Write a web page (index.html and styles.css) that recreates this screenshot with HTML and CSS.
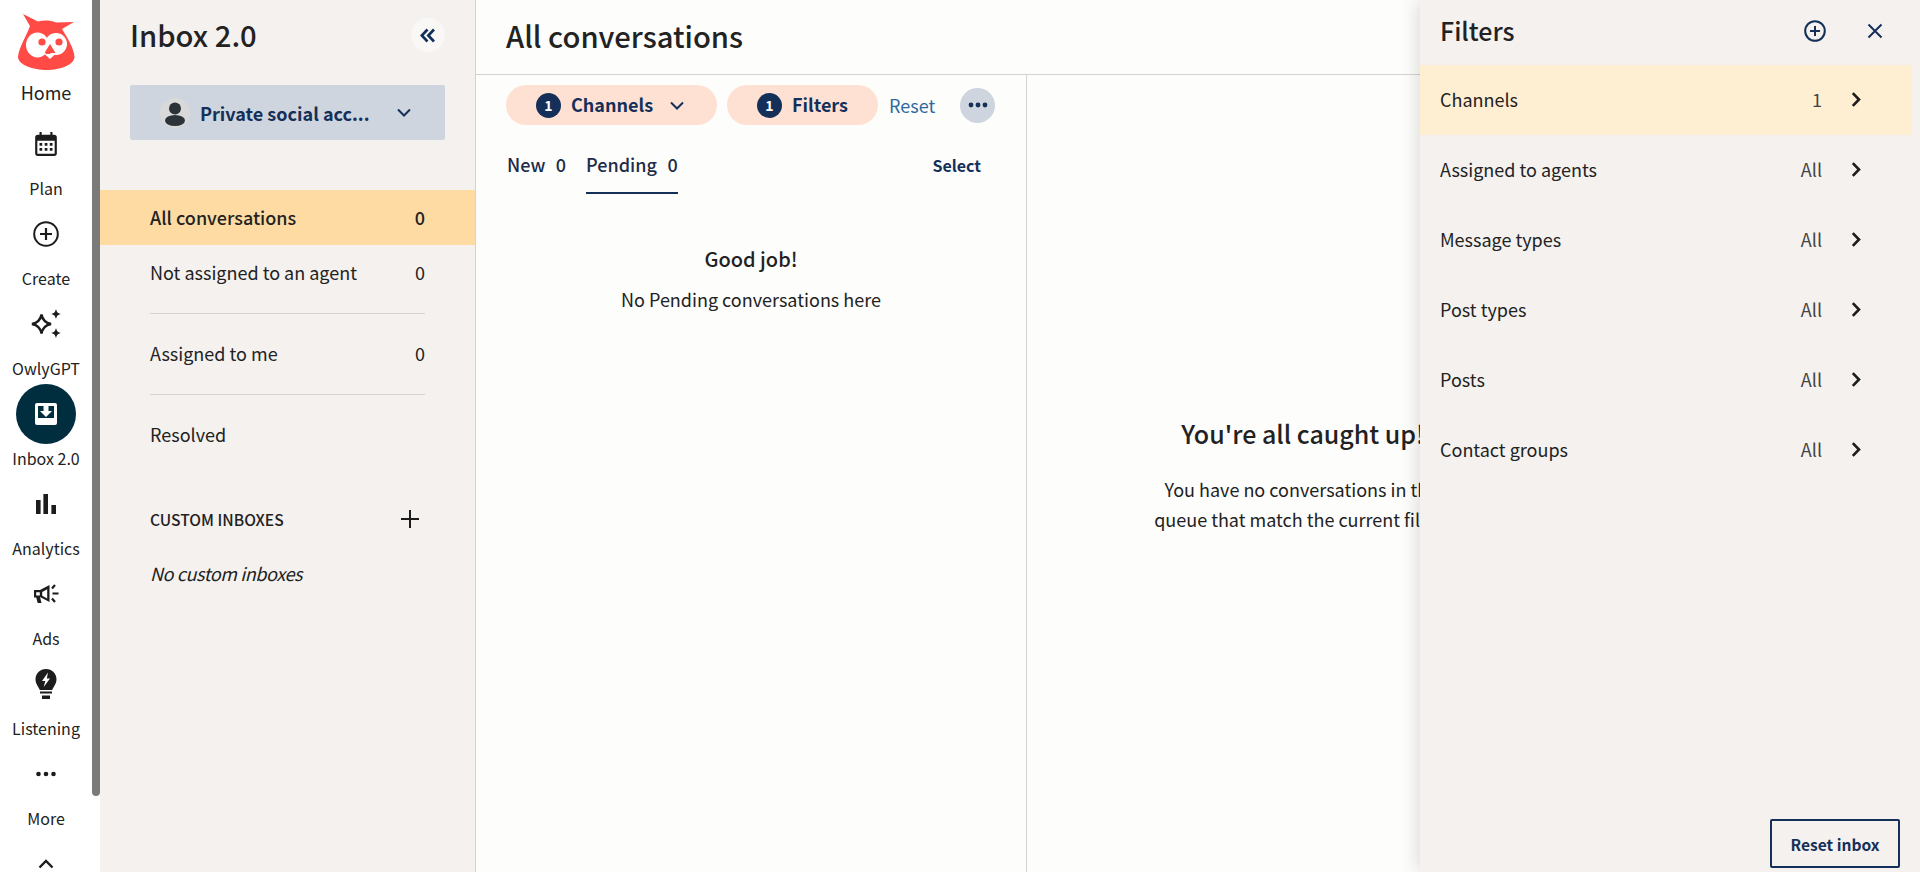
FILE: index.html
```html
<!DOCTYPE html>
<html lang="en">
<head>
    <meta charset="UTF-8">
    <meta name="viewport" content="width=device-width, initial-scale=1.0">
    <title>Inbox 2.0</title>
    <link rel="stylesheet" href="styles.css">
</head>
<body>

<div class="app">

    <!-- Main navigation -->
    <nav class="rail">
        <div class="rail-home">
            <svg class="owl" viewBox="10 8 72 68" width="72" height="68">
                <path fill="#ff4a45" d="M23 14 L38 21.500 C43 20 50 20 56 22.500 L74 22 L62 29 C67 37 74 48 74.500 57 C74 65 60 70 47 70 C33 70 18.500 65 18 57 C19 47 26 37 30 26 Z"/>
                <ellipse fill="#fff" cx="37.500" cy="45" rx="11.500" ry="12.500"/>
                <ellipse fill="#fff" cx="56" cy="44" rx="11" ry="11"/>
                <circle fill="#ff4a45" cx="42" cy="42" r="3.600"/>
                <circle fill="#ff4a45" cx="59" cy="42" r="3.600"/>
                <path fill="#ff4a45" d="M50 44 L55.500 53 H44.500 Z"/>
                <path fill="#fff" d="M44.500 54 H55.500 L50 59 Z"/>
            </svg>
            <span class="rail-label">Home</span>
        </div>
        <div class="rail-item">
            <div class="rail-icon">
                <svg viewBox="0 0 24 24" width="26" height="26"><path fill="#1c1c1c" d="M6 1h2v2.500h8V1h2v2.500h1.500A2.500 2.500 0 0 1 22 6v14.500a2.500 2.500 0 0 1-2.500 2.500h-15A2.500 2.500 0 0 1 2 20.500V6a2.500 2.500 0 0 1 2.500-2.500H6zM4 9v11.500a.5.5 0 0 0 .5.5h15a.5.5 0 0 0 .5-.5V9z"/><path fill="#1c1c1c" d="M6 11h2.500v2.500H6zM10.800 11h2.500v2.500h-2.500zM15.500 11H18v2.500h-2.500zM6 15.800h2.500v2.500H6zM10.800 15.800h2.500v2.500h-2.500zM15.500 15.800H18v2.500h-2.500z"/></svg>
            </div>
            <span class="rail-label">Plan</span>
        </div>
        <div class="rail-item">
            <div class="rail-icon">
                <svg viewBox="0 0 26 26" width="26" height="26"><circle cx="13" cy="13" r="11.800" fill="none" stroke="#1c1c1c" stroke-width="2"/><path d="M13 7v12M7 13h12" stroke="#1c1c1c" stroke-width="2.200"/></svg>
            </div>
            <span class="rail-label">Create</span>
        </div>
        <div class="rail-item">
            <div class="rail-icon">
                <svg viewBox="0 0 32 32" width="32" height="32"><path fill="none" stroke="#1c1c1c" stroke-width="2.400" stroke-linejoin="miter" d="M11.500 6.500 C12.500 12 15 14.800 21 16 C15 17.200 12.500 20 11.500 25.500 C10.500 20 8 17.200 2 16 C8 14.800 10.500 12 11.500 6.500 Z"/><path fill="#1c1c1c" d="M26 1 C26.800 4.200 27.800 5.200 31 6 C27.800 6.800 26.800 7.800 26 11 C25.200 7.800 24.200 6.800 21 6 C24.200 5.200 25.200 4.200 26 1 Z"/><path fill="#1c1c1c" d="M26 20 C26.800 23.200 27.800 24.200 31 25 C27.800 25.800 26.800 26.800 26 30 C25.200 26.800 24.200 25.800 21 25 C24.200 24.200 25.200 23.200 26 20 Z"/></svg>
            </div>
            <span class="rail-label">OwlyGPT</span>
        </div>
        <div class="rail-item is-active">
            <div class="rail-icon">
                <svg viewBox="0 0 22 22" width="22" height="22"><rect width="22" height="22" rx="2" fill="#fff"/><rect x="3" y="3" width="16" height="12" fill="#002e3f"/><path fill="#fff" d="M8.500 3h5v5h3.500L11 14 5 8h3.500z"/></svg>
            </div>
            <span class="rail-label">Inbox 2.0</span>
        </div>
        <div class="rail-item">
            <div class="rail-icon">
                <svg viewBox="0 0 20 20" width="20" height="20"><path fill="#1c1c1c" d="M0 6h4.600v14H0zM7.400 0H12v20H7.400zM15.400 11H20v9h-4.600z"/></svg>
            </div>
            <span class="rail-label">Analytics</span>
        </div>
        <div class="rail-item">
            <div class="rail-icon">
                <svg viewBox="0 0 26 26" width="26" height="26"><path fill="#1c1c1c" fill-rule="evenodd" d="M1 9h6L16.500 4v17L7 16l1.500 6H4.700L3.200 16.500H1zM3.200 11.200v3.200h3.600v-3.200zM9.200 11v3.700l5 2.700V8.300z"/><path stroke="#1c1c1c" stroke-width="2.200" d="M19.500 12.500h6M19 7.500l3-3.500M19 17.500l3 3.500"/></svg>
            </div>
            <span class="rail-label">Ads</span>
        </div>
        <div class="rail-item">
            <div class="rail-icon">
                <svg viewBox="0 0 22 30" width="22" height="30"><path fill="#1c1c1c" d="M11 0C5 0 .5 4.500.5 10.300c0 4.200 2.500 6.700 4.300 10.700h12.400c1.800-4 4.300-6.500 4.300-10.700C21.500 4.500 17 0 11 0zM5 22.500h12V24.500H5zM7 26.500h8v3.500H7z"/><path fill="#fff" d="M13 3.500 L7 12 H10.300 L8.700 18 L15 9.500 H11.800 Z"/></svg>
            </div>
            <span class="rail-label">Listening</span>
        </div>
        <div class="rail-item">
            <div class="rail-icon">
                <svg viewBox="0 0 20 6" width="20" height="6"><circle cx="2.500" cy="3" r="2.300" fill="#1c1c1c"/><circle cx="10" cy="3" r="2.300" fill="#1c1c1c"/><circle cx="17.500" cy="3" r="2.300" fill="#1c1c1c"/></svg>
            </div>
            <span class="rail-label">More</span>
        </div>
        <div class="rail-item">
            <div class="rail-icon">
                <svg viewBox="0 0 16 10" width="16" height="10"><path d="M1.500 8.500 8 2l6.500 6.500" fill="none" stroke="#1c1c1c" stroke-width="2.400"/></svg>
            </div>
        </div>
        <div class="rail-thumb"></div>
    </nav>

    <!-- Inbox sidebar -->
    <aside class="sidebar">
        <div class="sidebar-head">
            <h1>Inbox 2.0</h1>
            <button class="collapse-btn">
                <svg viewBox="0 0 16 14" width="16" height="15"><path d="M7.500 1 1.800 7l5.700 6M14 1 8.300 7l5.700 6" fill="none" stroke="#143059" stroke-width="2.700"/></svg>
            </button>
        </div>
        <button class="account-btn">
            <span class="avatar">
                <svg viewBox="0 0 30 30" width="30" height="30"><circle cx="15" cy="10.500" r="6" fill="#2b3338"/><ellipse cx="15" cy="22.500" rx="10" ry="5.500" fill="#2b3338"/></svg>
            </span>
            <span class="account-name">Private social acc...</span>
            <svg class="account-caret" viewBox="0 0 14 9" width="14" height="9"><path d="M1 1.500 7 7.500l6-6" fill="none" stroke="#143059" stroke-width="2"/></svg>
        </button>

        <ul class="menu">
            <li class="menu-row is-current"><span>All conversations</span><span>0</span></li>
            <li class="menu-row"><span>Not assigned to an agent</span><span>0</span></li>
            <li class="menu-line"></li>
            <li class="menu-row"><span>Assigned to me</span><span>0</span></li>
            <li class="menu-line"></li>
            <li class="menu-row"><span>Resolved</span></li>
        </ul>

        <div class="custom-head">
            <span>CUSTOM INBOXES</span>
            <svg viewBox="0 0 20 20" width="20" height="20"><path d="M10 1v18M1 10h18" stroke="#1c1c1c" stroke-width="2"/></svg>
        </div>
        <p class="custom-empty">No custom inboxes</p>
    </aside>

    <!-- Conversations -->
    <main class="main">
        <header class="main-head">
            <h2>All conversations</h2>
        </header>
        <div class="main-body">
            <section class="list-col">
                <div class="toolbar">
                    <button class="pill pill-channels">
                        <span class="pill-num">1</span>
                        <span class="pill-text">Channels</span>
                        <svg viewBox="0 0 14 9" width="14" height="9"><path d="M1 1.500 7 7.500l6-6" fill="none" stroke="#143059" stroke-width="2"/></svg>
                    </button>
                    <button class="pill pill-filters">
                        <span class="pill-num">1</span>
                        <span class="pill-text">Filters</span>
                    </button>
                    <a class="reset-link">Reset</a>
                    <button class="dots-btn">
                        <svg viewBox="0 0 20 6" width="20" height="6"><circle cx="3" cy="3" r="2.400" fill="#143059"/><circle cx="10" cy="3" r="2.400" fill="#143059"/><circle cx="17" cy="3" r="2.400" fill="#143059"/></svg>
                    </button>
                </div>
                <div class="tabs">
                    <span class="tab"><span>New</span><span>0</span></span>
                    <span class="tab is-open"><span>Pending</span><span>0</span></span>
                    <a class="select-link">Select</a>
                </div>
                <div class="list-empty">
                    <h3>Good job!</h3>
                    <p>No Pending conversations here</p>
                </div>
            </section>
            <section class="detail-col">
                <h3>You're all caught up!</h3>
                <p>You have no conversations in this<br>queue that match the current filters</p>
            </section>
        </div>
    </main>

    <!-- Filter drawer, sits over the main area -->
    <aside class="drawer">
        <div class="drawer-head">
            <h2>Filters</h2>
            <svg class="drawer-add" viewBox="0 0 22 22" width="22" height="22"><circle cx="11" cy="11" r="9.800" fill="none" stroke="#143059" stroke-width="2"/><path d="M11 6v10M6 11h10" stroke="#143059" stroke-width="2"/></svg>
            <svg class="drawer-close" viewBox="0 0 16 16" width="16" height="16"><path d="M1.500 1.500l13 13M14.500 1.500l-13 13" stroke="#143059" stroke-width="2"/></svg>
        </div>
        <ul class="filter-list">
            <li class="filter-row is-on"><span class="filter-name">Channels</span><span class="filter-val">1</span><svg viewBox="0 0 10 15" width="10" height="15"><path d="M1.800 1.200 8 7.500l-6.200 6.300" fill="none" stroke="#1c1c1c" stroke-width="2.600"/></svg></li>
            <li class="filter-row"><span class="filter-name">Assigned to agents</span><span class="filter-val">All</span><svg viewBox="0 0 10 15" width="10" height="15"><path d="M1.800 1.200 8 7.500l-6.200 6.300" fill="none" stroke="#1c1c1c" stroke-width="2.600"/></svg></li>
            <li class="filter-row"><span class="filter-name">Message types</span><span class="filter-val">All</span><svg viewBox="0 0 10 15" width="10" height="15"><path d="M1.800 1.200 8 7.500l-6.200 6.300" fill="none" stroke="#1c1c1c" stroke-width="2.600"/></svg></li>
            <li class="filter-row"><span class="filter-name">Post types</span><span class="filter-val">All</span><svg viewBox="0 0 10 15" width="10" height="15"><path d="M1.800 1.200 8 7.500l-6.200 6.300" fill="none" stroke="#1c1c1c" stroke-width="2.600"/></svg></li>
            <li class="filter-row"><span class="filter-name">Posts</span><span class="filter-val">All</span><svg viewBox="0 0 10 15" width="10" height="15"><path d="M1.800 1.200 8 7.500l-6.200 6.300" fill="none" stroke="#1c1c1c" stroke-width="2.600"/></svg></li>
            <li class="filter-row"><span class="filter-name">Contact groups</span><span class="filter-val">All</span><svg viewBox="0 0 10 15" width="10" height="15"><path d="M1.800 1.200 8 7.500l-6.200 6.300" fill="none" stroke="#1c1c1c" stroke-width="2.600"/></svg></li>
        </ul>
        <div class="drawer-foot">
            <button class="reset-inbox">Reset inbox</button>
        </div>
    </aside>

</div>

</body>
</html>
```

FILE: styles.css
```css
/* Basic Styling */
* {
    box-sizing: border-box;
}
html, body {
    height: 100%;
}
body {
    margin: 0;
    overflow: hidden;
    font-family: "Noto Sans CJK JP", "Noto Sans", Arial, sans-serif;
    font-size: 18px;
    line-height: 26px;
    color: #222;
    background-color: #fdfdfb;
}
h1, h2, h3, p, ul {
    margin: 0;
    padding: 0;
    font-weight: normal;
}
ul {
    list-style: none;
}
button {
    font: inherit;
    border: none;
    padding: 0;
    background: none;
    color: inherit;
}
.app {
    display: flex;
    position: relative;
    height: 872px;
    overflow: hidden;
}

/* Left rail */
.rail {
    position: relative;
    flex: 0 0 100px;
    width: 100px;
    height: 872px;
    padding-right: 8px;
    background-color: #fff;
    overflow: hidden;
}
.rail-home {
    height: 114px;
    padding-top: 8px;
    display: flex;
    flex-direction: column;
    align-items: center;
}
.owl {
    display: block;
    flex: none;
}
.rail-home .rail-label {
    font-size: 18px;
    line-height: 24px;
    margin-top: 4px;
}
.rail-item {
    height: 90px;
    display: flex;
    flex-direction: column;
    align-items: center;
}
.rail-icon {
    width: 60px;
    height: 60px;
    border-radius: 50%;
    display: flex;
    align-items: center;
    justify-content: center;
    flex: none;
}
.rail-label {
    font-size: 16px;
    line-height: 28px;
    color: #222;
}
.rail-item.is-active .rail-icon {
    background-color: #002e3f;
}
.rail-thumb {
    position: absolute;
    top: 0;
    right: 0;
    width: 8px;
    height: 796px;
    background-color: #7a7a7a;
    border-radius: 0 0 4px 4px;
}

/* Inbox sidebar */
.sidebar {
    flex: 0 0 376px;
    height: 872px;
    background-color: #f4f1ef;
    border-right: 1px solid #d3d3d3;
}
.sidebar-head {
    display: flex;
    align-items: center;
    justify-content: space-between;
    height: 70px;
    padding: 0 30px;
}
.sidebar-head h1 {
    font-size: 29.200px;
    font-weight: 500;
    line-height: 34px;
    margin-bottom: 2px;
}
.collapse-btn {
    width: 34px;
    height: 34px;
    border-radius: 50%;
    background-color: #faf8f7;
    display: flex;
    align-items: center;
    justify-content: center;
}
.account-btn {
    display: flex;
    align-items: center;
    width: 315px;
    height: 55px;
    margin: 15px 0 50px 30px;
    padding: 0 0 0 30px;
    background-color: #cfd5de;
    border-radius: 2px;
    color: #143059;
    font-weight: 700;
}
.avatar {
    width: 30px;
    height: 30px;
    border-radius: 50%;
    background-color: #d9d9d9;
    flex: none;
}
.avatar svg {
    display: block;
}
.account-name {
    margin-left: 10px;
    white-space: nowrap;
}
.account-caret {
    margin-left: 27px;
}
.menu-row {
    display: flex;
    justify-content: space-between;
    align-items: center;
    height: 55px;
    padding: 0 50px 2px 50px;
}
.menu-row.is-current {
    background-color: #fddba3;
    font-weight: 500;
}
.menu-line {
    height: 1px;
    margin: 13px 50px 12px;
    background-color: #d3d3d3;
}
.custom-head {
    display: flex;
    justify-content: space-between;
    align-items: center;
    height: 30px;
    margin-top: 42px;
    padding: 0 55px 0 50px;
    font-size: 15.600px;
    font-weight: 500;
}
.custom-empty {
    margin-top: 24px;
    padding-left: 50px;
    font-style: italic;
    letter-spacing: -0.4px;
    line-height: 30px;
}

/* Main area */
.main {
    flex: 1;
    min-width: 0;
}
.main-head {
    height: 75px;
    padding: 0 30px 4px;
    border-bottom: 1px solid #d3d3d3;
    display: flex;
    align-items: center;
}
.main-head h2 {
    font-size: 29.200px;
    font-weight: 500;
    line-height: 36px;
}
.main-body {
    display: flex;
    height: 797px;
}
.list-col {
    flex: 0 0 551px;
    border-right: 1px solid #d3d3d3;
    padding-top: 10px;
}
.toolbar {
    display: flex;
    align-items: center;
    height: 40px;
    padding-left: 30px;
}
.pill {
    display: flex;
    align-items: center;
    height: 40px;
    border-radius: 20px;
    background-color: #ffe1d4;
    color: #143059;
    font-weight: 700;
}
.pill-text {
    margin-bottom: 2px;
}
.pill-channels {
    width: 211px;
    padding-left: 30px;
}
.pill-filters {
    width: 151px;
    margin-left: 10px;
    padding-left: 30px;
}
.pill-num {
    width: 25px;
    height: 25px;
    border-radius: 50%;
    background-color: #143059;
    color: #fff;
    font-size: 14px;
    line-height: 25px;
    font-weight: 700;
    text-align: center;
    margin-right: 10px;
}
.pill-channels svg {
    margin-left: 17px;
}
.reset-link {
    margin-left: 11px;
    color: #2d6a9f;
}
.dots-btn {
    width: 35px;
    height: 35px;
    margin-left: 25px;
    border-radius: 50%;
    background-color: #cfd5de;
    display: flex;
    align-items: center;
    justify-content: center;
}
.tabs {
    display: flex;
    align-items: stretch;
    height: 69px;
    padding: 0 0 0 31px;
    color: #1d2c48;
    font-weight: 500;
}
.tab {
    display: flex;
    gap: 10.500px;
    align-items: center;
    height: 69px;
    padding-top: 11px;
    margin-right: 20px;
    border-bottom: 2px solid transparent;
}
.tab.is-open {
    border-bottom-color: #143059;
}
.select-link {
    margin-left: auto;
    margin-right: 45px;
    align-self: flex-start;
    margin-top: 27px;
    color: #143059;
    font-size: 16px;
    font-weight: 700;
}
.list-empty {
    text-align: center;
    margin-top: 50px;
}
.list-empty h3 {
    font-size: 20px;
    font-weight: 500;
    line-height: 30px;
}
.list-empty p {
    margin-top: 10px;
    line-height: 30px;
}
.detail-col {
    flex: 0 0 552px;
    padding-top: 343px;
    text-align: center;
}
.detail-col h3 {
    font-size: 25px;
    font-weight: 500;
    line-height: 30px;
}
.detail-col p {
    margin-top: 26px;
    line-height: 30px;
}

/* Filter drawer */
.drawer {
    position: absolute;
    top: 0;
    right: 0;
    bottom: 0;
    width: 500px;
    display: flex;
    flex-direction: column;
    background-color: #f4f1ef;
    box-shadow: -4px 0 16px rgba(0, 0, 0, 0.12);
}
.drawer-head {
    display: flex;
    align-items: center;
    height: 65px;
    padding: 0 37px 4px 20px;
}
.drawer-head h2 {
    font-size: 25px;
    font-weight: 500;
    line-height: 30px;
    margin-bottom: 2px;
    flex: 1;
}
.drawer-close {
    margin-left: 41px;
}
.filter-row {
    display: flex;
    align-items: center;
    height: 70px;
    width: 492px;
    padding: 0 0 2px 20px;
}
.filter-row.is-on {
    background-color: #feeed2;
}
.filter-name {
    flex: 1;
}
.filter-val {
    color: #444;
    margin-right: 29px;
}
.filter-row svg {
    margin-right: 51px;
}
.drawer-foot {
    margin-top: auto;
    display: flex;
    justify-content: flex-end;
    padding: 0 20px 4px 0;
}
.reset-inbox {
    width: 130px;
    height: 49px;
    border: 2px solid #143059;
    border-radius: 2px;
    color: #143059;
    font-size: 15.600px;
    font-weight: 700;
}
```
